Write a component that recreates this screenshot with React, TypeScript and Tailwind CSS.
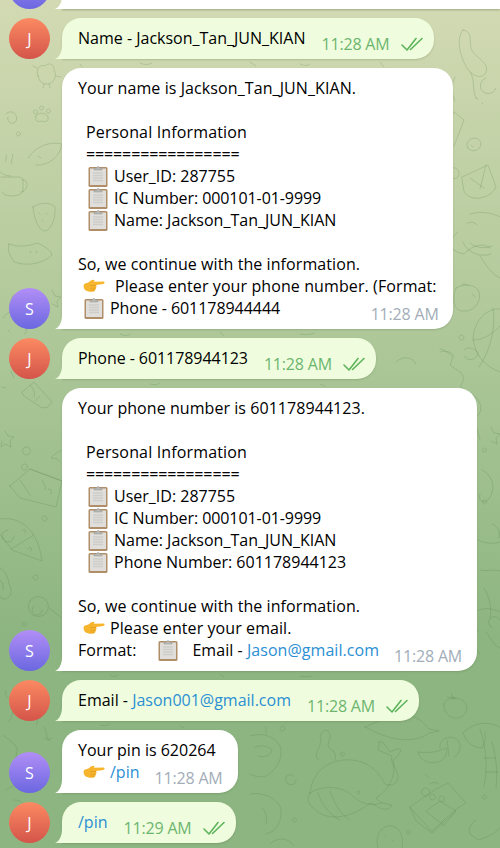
import type { ReactNode } from 'react'

const doodles = [
  // left gutter, top
  'M38 76c-3-7 2-12 7-10 3-4 10-2 9 4 4 6-1 15-8 14-4 0-7-3-8-8zM37 68l-4-2M56 76l5 1M44 84l-1 4M49 84l1 4',
  'M36 116c2-4 10-4 12 1 1 5-3 5-6 4-3 1-8 1-6-5zM35 110a2 2 0 1 0 1 0M41 106a2 2 0 1 0 1 0M48 109a2 2 0 1 0 1 0',
  'M28 158c8-12 22-17 34-14-2 13-14 22-26 21M38 156l3 2',
  'M1 177h19l3 2v12c-2 6-18 7-21 1M22 180c7-2 7 11-1 12M0 172c3 3 8 4 11 4M12 164c-3-4 3-6 0-10M6 162c-2-2 2-4 0-7',
  'M33 207c7-5 17-5 22 0 1 14-5 23-10 24-6 0-11-12-12-24zM39 213l1 1M46 213l1 1M42 220l1 1',
  'M6 114c5-6 13 1 10 7-3 5-10 1-8-4M18 132a2 2 0 1 0 1 0',
  // left gutter, middle
  'M9 244c8 3 18 3 28-1 8 3 14 8 15 12-8 8-24 12-38 7-4-6-7-12-5-18zM30 251l1 2M36 251l1 2',
  'M52 290l3 6 6 1-4 4 1 6-6-3M14 294c-6 8-6 20 4 26 10 0 20-6 24-14',
  'M3 318c3-7 14-8 20-2M22 345l16 14M15 352l14 13M8 330l2 2M28 326l-3 8',
  'M22 392l12-10 18 20-4 5-6 1-18-12zM30 385c3 3 6 8 4 12M40 396l-5 5M14 378l-3-7M28 375l-1-7M6 388l-4-1',
  'M5 431l3 5 6 1-4 4 1 6-6-3-4 3 1-6',
  'M26 447a4 4 0 1 0 1 0M62 450c-5 3-8 4-11 8 4 0 8 1 9 4',
  // chocolate bar
  'M30 469l32 12M10 486l20-17 32 12-6 26-36-9-10-12zM20 480l10 15M24 464a3 3 0 1 0 1 0M42 480c2 4 4 6 3 10M48 490c2-3 4 0 3 4',
  // pizza
  'M0 519c20-3 38 10 42 42L12 550 0 534M11 549l23-14M8 530a6 6 0 1 0 6 6M22 531c2-3 5-1 3 2M28 549c2-3 5-1 3 2',
  'M44 516a2.500 2.500 0 1 0 1 0M35 575a2.500 2.500 0 1 0 1 0',
  'M0 568c5 3 8 8 9 16 3 6 3 10-1 14-4 2-7 1-8-2M0 580l3 4 0 6',
  // lollipop
  'M30 601a10 10 0 1 0 18 8 10 10 0 0 0-18-8zM34 606a5 5 0 1 0 8 4M49 608l13 10M24 622a2 2 0 1 0 1 0',
  // left gutter, bottom
  'M6 690c-2 6 2 10 6 8M10 700c4 8 4 16-2 22M24 690c6 4 10 10 8 18M42 716c-4 2-6 6-5 9',
  'M3 735c6 6 14 8 14 16-2 8 0 14 4 18M44 727c3 4 2 10 5 14M44 738c3 2 6 2 8 0',
  'M6 790c8-6 18-8 28-4M14 800c6 0 10 2 10 6',
  // right gutter, top
  'M463 30c12 2 4 14 10 22 6 8 18 12 12 22-6 6-14 0-18-6-6-10-12-28-4-38z',
  'M455 77c-4 8-4 16 0 24M470 72c5 6 2 18 6 26M486 78a8 8 0 1 0 10 10',
  'M454 112l10 8-10 26-13-3zM476 98l2 1M482 103l1 1',
  'M468 148c-5-7 7-14 12-7 4 7-7 14-12 7zM471 145l2 2',
  'M462 177l26-12 8 22c-5 12-27 16-32 4zM470 178l14 10M486 165l-6 24M452 168c5-2 9 5 6 9-3 3-10 2-8-4',
  'M458 232c-11 9-10 19 6 22 8-8 18-12 26-6M470 214c12-4 26 0 32 4M466 224c4-3 9-2 11 1',
  // right gutter, middle
  'M463 242c4 10 16 16 28 12M470 243c6 5 14 6 22 3M480 256c6 10 14 20 20 22',
  'M456 288c8-5 20-4 23 4 3 10-6 20-15 19-9 1-13-10-8-23zM462 285c2-2 4-1 6 1M472 294l3 3',
  'M500 309c-14-1-26 12-27 30 3 18 13 28 27 33M493 308c3 18-2 42-14 59M473 340c10 0 20-6 27-14M461 335a2.500 2.500 0 1 0 1 0',
  'M440 349c4 0 8 4 13 8l-3 8 10 7c5 4 4 10 0 14l8 6c12 5 20 20 4 28M474 420c2 6 5 14 6 20',
  'M491 427l3 6 6 1-4 4 1 6-6-3M484 448a2 2 0 1 0 1 0M484 500a2 2 0 1 0 1 0',
  // right gutter, lower
  'M482 470c12 6 14 20 6 30-6 4-10 0-8-6M492 524c6 2 9 8 7 14M478 540c8 4 14 4 22 2',
  'M480 570c8 2 16-2 22 2M484 588c6 10 8 20 6 30M478 610c8-2 14-2 22 2',
  'M478 630c-6 8-4 18 2 24M486 632c6 8 8 14 14 16M500 620a6 6 0 1 0-8 8',
  // whale
  'M310 793c2-22 20-35 42-33 13 1 26 9 33 24 7 3 13-1 13-8-2-9-8-13-6-20l-14-6c1-4 2-6 0-8 3-1 6 1 8 4 2 3 3 6 5 6 3-3 8-4 10-2-1 5-6 8-8 10 3 12-1 28-17 38 4 5 10 6 16 7-3 6-9 5-16 1-3-2-6-4-7-2-16 12-40 20-56 4-4-4-7-9-3-15z',
  'M310 793c12-8 32-8 44 4 6 6 17 10 28 6M318 793c4 12 12 22 22 27M330 791c4 12 11 24 20 29M358 791a1.500 1.500 0 1 0 1 0',
  'M318 760c-6-8 6-14 2-24 2-6 8-8 10-2 1 6-4 10-1 14 4 3 8 4 6 12M342 752a2 2 0 1 0 1 0M293 776c-5-4-10 2-6 7 4 3 9 2 9-3',
  // chest and coins
  'M410 807l26-18 12-6 18 20-10 6-24 22zM410 807l6 14 16 12 24-22M426 811l14-10 16 10-12 14zM425 788a4 4 0 1 0 1 0M432 794a3 3 0 1 0 1 0M441 796a3 3 0 1 0 1 0M425 774l4 4M430 784c3-2 7-2 9 0',
  // fruits, palm, planet, dolphin
  'M463 733c10-11 25-12 37-6M463 733c4 10 10 15 19 15 3-5 4-10 3-16M480 729c6 18 8 38 4 58M492 742c4 14 6 30 4 46M484 758h12M486 772h12',
  'M418 752c2 10 14 13 23 9 4-3 7-8 5-13-10 5-20 5-28 4zM440 748c-2-10 12-14 17-8 6 4 3 14-3 17M447 740l2 16',
  'M444 704c2-8 18-8 22 0 3 8-3 14-10 14-7 0-13-6-12-14zM451 693l3 7M447 697l9 1',
  'M250 736c12-4 24 0 30 10 4 12-4 24-14 30-6 2-12 0-16-2M254 748c6-4 14-2 18 2-2 6-8 8-14 6M282 726a2.500 2.500 0 1 0 1 0M266 727v7',
  'M365 727c12-4 24-12 32-14 14 0 24 6 32 16l10 2-10 2c-6 6-22 8-32 6-12-2-20-6-32-12zM280 708c2 4 6 4 8 2M296 696c4 3 10 3 12 1',
  'M250 794c10-2 24 2 30 12 4 14-4 26-14 28M262 808c4 4 6 10 4 16M294 818a2 2 0 1 0 1 0',
  'M378 848c-4-12 4-24 14-22 8 2 12 10 10 22M385 836l1 1M392 840l1 1M270 844c6-6 18-8 24 2M408 830a2 2 0 1 0 1 0',
  'M476 820c-6 4-8 10-6 14l8 6c6-2 14-4 22-12M484 795a2 2 0 1 0 1 0',
  // strips between the bubbles
  'M396 362c6-6 16-6 20 2M440 352c6-2 12 0 14 4M464 350c4-4 12-2 14 4-2 6-10 8-14 2',
  'M250 62l6 4M300 64c4 2 8 2 10 0M80 64l2 3M140 63c4 2 8 2 12 0M380 62l4 5',
  'M120 334c4 2 8 2 10 0M220 332l4 4M300 334c6 1 10 1 14-1M150 384c4 1 8 1 10-1M320 384l5 2',
  'M110 675c3 2 6 2 8 0M220 674l4 3M300 676c5 1 8 1 12 0M100 725c4 1 8 1 10-1M180 726l4 2',
]

function Wallpaper() {
  return (
    <svg className="absolute inset-0" width="500" height="848" viewBox="0 0 500 848" fill="none">
      {doodles.map((d, i) => (
        <path key={i} d={d} stroke="#4f7d45" strokeOpacity="0.22" strokeWidth="1" strokeLinecap="round" strokeLinejoin="round" />
      ))}
    </svg>
  )
}

function Clipboard() {
  return (
    <svg width="20" height="22" viewBox="0 0 20 22" className="shrink-0">
      <rect x="0.5" y="2" width="19" height="20" rx="1.5" fill="#b08f68" />
      <rect x="2" y="3.500" width="16" height="16.500" fill="#dfdeda" />
      <path d="M5 8h10M5 10.500h10M5 13h10M5 15.500h10" stroke="#cdcdc9" strokeWidth="1.400" />
      <path d="M6 5V3h2.500C9 1 11 1 11.500 3H14v2z" fill="#b8b8b6" stroke="#96968f" strokeWidth="0.500" />
    </svg>
  )
}

function Hand() {
  return (
    <svg width="22" height="14" viewBox="0 0 22 14" className="shrink-0">
      <path d="M0.500 6.500C1 4.500 3 4 5 3.800 6.500 2.600 8.500 0.800 10.500 0.800c1.200 0 1.200 1.400 0.200 2L20.500 2.600c1.500 0.200 1.500 2 0 2.300l-7.500 1c0.800 0.800 0.800 1.900 0 2.400 0.500 1 0 1.900-0.700 2.200 0.100 1.100-0.700 1.900-1.700 2-2 0.300-4 0.300-5.600-0.300C3 11.800 0.800 11 0.500 6.500z" fill="#f7b52e" />
      <path d="M7 6.500h6M7.500 9c1.700 0.200 3.300 0.200 5 0M7.500 11c1.400 0.200 2.800 0.200 4 0" stroke="#de9a1c" strokeWidth="0.700" fill="none" />
    </svg>
  )
}

function Checks() {
  return (
    <svg width="22" height="14" viewBox="0 0 22 14" fill="none" className="shrink-0 mt-[10px] -mb-[2px]">
      <path d="M1 8l5 5L15 1.500M9.500 12.500L21 1.500" stroke="#5fb35c" strokeWidth="1.600" strokeLinecap="round" strokeLinejoin="round" />
    </svg>
  )
}

function Time({ children, out, className = '' }: { children: string; out?: boolean; className?: string }) {
  return (
    <span className={`shrink-0 mt-[6px] -mb-[6px] whitespace-pre tracking-[-0.18px] ${out ? 'text-[#6db56f]' : 'text-[#a2adb8]'} ${className}`}>
      {children}
    </span>
  )
}

function Link({ children }: { children: string }) {
  return <span className="text-[#2b8fd3]">{children}</span>
}

function Line({ children, className = '' }: { children?: ReactNode; className?: string }) {
  return <div className={`flex items-center h-[22px] whitespace-pre ${className}`}>{children}</div>
}

function ClipLine({ children, className = '' }: { children: ReactNode; className?: string }) {
  return (
    <Line className={`pl-[10px] gap-[6px] ${className}`}>
      <Clipboard />
      <span>{children}</span>
    </Line>
  )
}

function Avatar({ letter }: { letter?: string }) {
  const color = letter === 'J' ? 'from-[#fb8a62] to-[#d4544a]' : 'from-[#b28ef6] to-[#6b67e0]'
  return (
    <div className={`w-[41px] h-[41px] shrink-0 rounded-full bg-gradient-to-b ${color} flex items-center justify-center text-white text-[16px]`}>
      {letter}
    </div>
  )
}

function Tail({ fill }: { fill: string }) {
  return (
    <svg className="absolute -left-[7px] bottom-0" width="8" height="14" viewBox="0 0 8 14">
      <path d="M8 0v14H0c3-1 7-5 7-14z" fill={fill} />
    </svg>
  )
}

function Row({ letter, out, children }: { letter: string; out?: boolean; children: ReactNode }) {
  return (
    <div className="flex items-end pl-[9px] gap-[12px]">
      <Avatar letter={letter} />
      <div className={`relative rounded-[19px] rounded-bl-none pt-[9px] pb-[10px] pl-[16px] shadow-[0_1px_2px_rgba(60,80,40,0.2)] ${out ? 'bg-[#effdde] pr-[11px]' : 'bg-white pr-[16px]'}`}>
        <Tail fill={out ? '#effdde' : '#ffffff'} />
        {children}
      </div>
    </div>
  )
}

function Sent({ children, time, className = '' }: { children: ReactNode; time: string; className?: string }) {
  return (
    <Row letter="J" out>
      <div className="flex h-[22px] leading-[22px] whitespace-pre">
        <span className={`mr-[16px] ${className}`}>{children}</span>
        <Time out>{time}</Time>
        <span className="ml-[11px] flex">
          <Checks />
        </span>
      </div>
    </Row>
  )
}

export default function App() {
  return (
    <div className="relative w-[500px] h-[848px] overflow-hidden bg-gradient-to-b from-[#d3dab3] via-[#a9c596] via-45% to-[#8db581] to-75% font-['Open_Sans',sans-serif] text-[16px] leading-[22px] text-black">
      <Wallpaper />
      <div className="relative flex flex-col">
        {/* end of the previous message, scrolled off the top */}
        <div className="flex items-end pl-[9px] gap-[12px] h-[9px] mb-[9px]">
          <div className="h-[9px] overflow-hidden flex items-end">
            <Avatar />
          </div>
          <div className="relative h-[9px] grow bg-white shadow-[0_1px_2px_rgba(60,80,40,0.35)]">
            <Tail fill="#ffffff" />
          </div>
        </div>

        <div className="flex flex-col gap-[9px]">
          <Sent time="11:28 AM">Name - Jackson_Tan_JUN_KIAN</Sent>

          <Row letter="S">
            <Line className="tracking-[0.09px]">Your name is Jackson_Tan_JUN_KIAN.</Line>
            <Line />
            <Line className="pl-2 tracking-[0.15px]">Personal Information</Line>
            <Line className="pl-2 tracking-[-0.12px]">=================</Line>
            <ClipLine>User_ID: 287755</ClipLine>
            <ClipLine className="tracking-[-0.08px]">IC Number: 000101-01-9999</ClipLine>
            <ClipLine>Name: Jackson_Tan_JUN_KIAN</ClipLine>
            <Line />
            <Line className="tracking-[0.08px]">So, we continue with the information.</Line>
            <Line className="pl-[5px] gap-[10px] tracking-[0.1px]">
              <Hand />
              <span>Please enter your phone number. (Format:</span>
            </Line>
            <div className="flex justify-between">
              <Line className="pl-[6px] gap-[6px] tracking-[-0.05px]">
                <Clipboard />
                <span>Phone - 601178944444</span>
              </Line>
              <Time className="-mr-[2px]">11:28 AM</Time>
            </div>
          </Row>

          <Sent time="11:28 AM" className="tracking-[-0.06px]">
            Phone - 601178944123
          </Sent>

          <Row letter="S">
            <Line className="tracking-[0.06px]">Your phone number is 601178944123.</Line>
            <Line />
            <Line className="pl-2 tracking-[0.15px]">Personal Information</Line>
            <Line className="pl-2 tracking-[-0.12px]">=================</Line>
            <ClipLine>User_ID: 287755</ClipLine>
            <ClipLine className="tracking-[-0.08px]">IC Number: 000101-01-9999</ClipLine>
            <ClipLine>Name: Jackson_Tan_JUN_KIAN</ClipLine>
            <ClipLine>Phone Number: 601178944123</ClipLine>
            <Line />
            <Line className="tracking-[0.08px]">So, we continue with the information.</Line>
            <Line className="pl-[5px] gap-[5px] tracking-[0.08px]">
              <Hand />
              <span>Please enter your email.</span>
            </Line>
            <div className="flex gap-[15px]">
              <Line className="tracking-[0.05px]">
                <span>Format:</span>
                <span className="ml-[22px] mr-[14px]">
                  <Clipboard />
                </span>
                <span>
                  Email - <Link>Jason@gmail.com</Link>
                </span>
              </Line>
              <Time className="-mr-px">11:28 AM</Time>
            </div>
          </Row>

          <Sent time="11:28 AM">
            Email - <Link>Jason001@gmail.com</Link>
          </Sent>

          <Row letter="S">
            <Line>Your pin is 620264</Line>
            <div className="flex gap-[15px]">
              <Line className="pl-[5px] gap-[5px]">
                <Hand />
                <Link>/pin</Link>
              </Line>
              <Time className="-mr-px">11:28 AM</Time>
            </div>
          </Row>

          <Sent time="11:29 AM">
            <Link>/pin</Link>
          </Sent>
        </div>
      </div>
    </div>
  )
}
